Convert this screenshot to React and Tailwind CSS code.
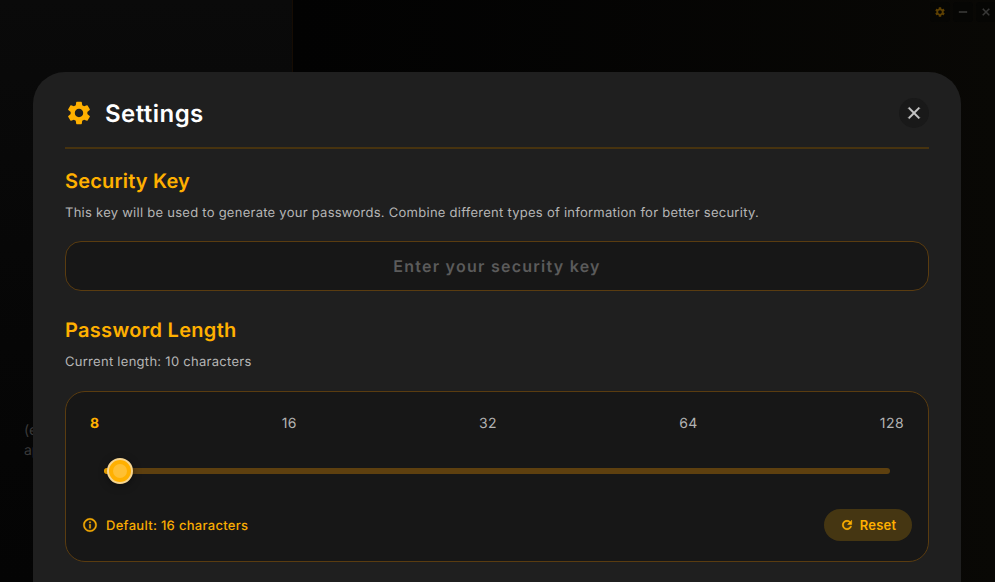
import { MdSettings } from "react-icons/md";

const marks = ["8", "16", "32", "64", "128"];

function Glyph({ d, size, weight = 0.6, className = "" }) {
  return (
    <svg
      viewBox="0 0 24 24"
      width={size}
      height={size}
      fill="currentColor"
      stroke="currentColor"
      strokeWidth={weight}
      className={className}
    >
      <path d={d} />
    </svg>
  );
}

const closePath =
  "M19 6.41 17.59 5 12 10.59 6.41 5 5 6.41 10.59 12 5 17.59 6.41 19 12 13.41 17.59 19 19 17.59 13.41 12z";
const refreshPath =
  "M17.65 6.35A7.958 7.958 0 0 0 12 4c-4.42 0-7.99 3.58-7.99 8s3.57 8 7.99 8c3.73 0 6.84-2.55 7.73-6h-2.08A5.99 5.99 0 0 1 12 18c-3.31 0-6-2.69-6-6s2.69-6 6-6c1.66 0 3.14.69 4.22 1.78L13 11h7V4z";
const infoPath =
  "M11 7h2v2h-2zm0 4h2v6h-2zm1-9C6.48 2 2 6.48 2 12s4.48 10 10 10 10-4.48 10-10S17.52 2 12 2m0 18c-4.41 0-8-3.59-8-8s3.59-8 8-8 8 3.59 8 8-3.59 8-8 8";

function Backdrop() {
  return (
    <div className="flex h-full">
      <aside className="flex w-[293px] shrink-0 flex-col justify-end border-r border-[#160c03] bg-linear-to-b from-[#0a0a0a] to-[#040404] pb-[121px] pl-6">
        <p className="text-[14px] leading-5 text-[#3a3a3a]">
          (example)
          <br />
          app
        </p>
      </aside>
      <main className="flex flex-1 items-start justify-end bg-linear-to-r from-[#020202] to-[#090805]">
        <div className="-mr-[1px] flex gap-[3px] pt-[2px]">
          <span className="flex size-5 items-center justify-center rounded bg-[#060604] text-[#5d4003]">
            <MdSettings size={12} />
          </span>
          <span className="flex size-5 items-center justify-center rounded bg-[#060604] text-[#3c3c3b]">
            <Glyph d="M4 11h16v2H4z" size={12} weight={1} />
          </span>
          <span className="flex size-5 items-center justify-center rounded bg-[#060604] text-[#3c3c3b]">
            <Glyph d={closePath} size={12} weight={1} />
          </span>
        </div>
      </main>
    </div>
  );
}

function LengthPanel() {
  return (
    <div className="mt-[19px] flex h-[171px] flex-col rounded-[20px] border border-[#5a3c10] bg-[#171717] px-4">
      <div className="mt-[22px] flex justify-between px-2 text-[14px] leading-5 tracking-[0.4px] text-[#b3b3b3]">
        {marks.map((m, i) => (
          <span key={m} className={i === 0 ? "font-bold text-[#ffb000]" : ""}>
            {m}
          </span>
        ))}
      </div>
      <div className="mx-[22px] mt-[34px] flex h-[6px] items-center rounded-full bg-[#5e400f]">
        <div className="h-[6px] w-[4px] shrink-0 rounded-l-full bg-[#ffb000]" />
        <div className="-ml-[1px] flex size-[26px] shrink-0 items-center justify-center rounded-full border-2 border-[#f6d591] bg-[#ffb000] shadow-[0_2px_8px_rgba(0,0,0,0.4)]">
          <div className="size-[14px] rounded-full bg-[#ffc033]" />
        </div>
      </div>
      <div className="mt-[35px] flex h-8 items-center">
        <Glyph d={infoPath} size={16} weight={0.6} className="text-[#f8ac02]" />
        <span className="ml-2 pt-[1px] text-[13px] leading-5 font-medium tracking-[0.3px] text-[#f8ac02]">
          Default: 16 characters
        </span>
        <button className="ml-auto flex h-8 w-[88px] items-center justify-center gap-[6px] rounded-full bg-[#453612] text-[13px] font-semibold tracking-[0.2px] text-[#ffb000]">
          <Glyph d={refreshPath} size={14} weight={1} />
          <span className="leading-5">Reset</span>
        </button>
      </div>
    </div>
  );
}

export default function App() {
  return (
    <div className="relative h-[582px] w-[995px] overflow-hidden bg-black font-[Inter,sans-serif] [text-rendering:geometricPrecision]">
      <Backdrop />
      <div className="absolute inset-0 flex justify-center pt-[72px] pr-[1px]">
        <section className="h-[560px] w-[928px] rounded-[32px] bg-[#1f1f1f] px-8">
          <header className="flex h-[77px] items-center border-b-2 border-[#47330f] pt-[7px]">
            <MdSettings size={28} className="text-[#ffb000]" />
            <h1 className="ml-3 pt-[2px] text-[24px] leading-8 font-semibold tracking-[0.45px] text-white">Settings</h1>
            <button className="ml-auto flex size-[30px] items-center justify-center rounded-full bg-[#191919] text-[#c5c5c5]">
              <Glyph d={closePath} size={20} weight={0.6} />
            </button>
          </header>
          <h2 className="mt-[18px] text-[20px] leading-7 font-semibold tracking-[0.18px] text-[#ffb000]">
            Security Key
          </h2>
          <p className="mt-[8px] text-[13px] leading-5 tracking-[0.26px] text-[#b6b6b6]">
            This key will be used to generate your passwords. Combine different types of information for better
            security.
          </p>
          <input
            placeholder="Enter your security key"
            className="mt-[18px] block h-[50px] w-full rounded-[16px] border border-[#5a3c10] bg-[#171717] text-center text-[16px] font-semibold tracking-[1.25px] outline-none [text-rendering:geometricPrecision] placeholder:text-[#5b5b5b]"
          />
          <h2 className="mt-[25px] text-[20px] leading-7 font-semibold tracking-[0.3px] text-[#ffb000]">
            Password Length
          </h2>
          <p className="mt-[8px] text-[13px] leading-5 tracking-[0.28px] text-[#b6b6b6]">
            Current length: 10 characters
          </p>
          <LengthPanel />
        </section>
      </div>
    </div>
  );
}
